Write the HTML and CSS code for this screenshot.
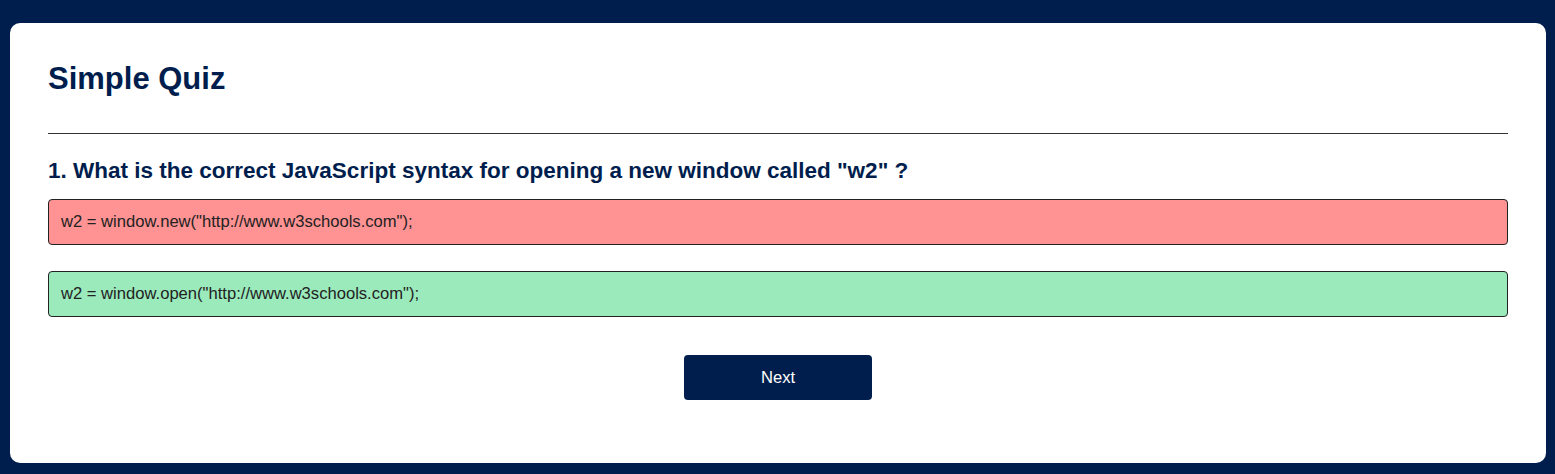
FILE: index.html
```html
<!DOCTYPE html>
<html lang="en">
<head>
<meta charset="utf-8">
<title>Simple Quiz</title>
<link rel="stylesheet" href="styles.css">
</head>
<body>
<div class="app">
  <h1 class="title">Simple Quiz</h1>
  <div class="quiz">
    <h2 class="question">1. What is the correct JavaScript syntax for opening a new window called "w2" ?</h2>
    <div class="answers">
      <button class="answer incorrect">w2 = window.new("http://www.w3schools.com");</button>
      <button class="answer correct">w2 = window.open("http://www.w3schools.com");</button>
    </div>
    <button class="next">Next</button>
  </div>
</div>
</body>
</html>
```
FILE: styles.css
```css
* { box-sizing: border-box; margin: 0; padding: 0; }
html, body { height: 100%; }
body {
  background: #001e4d;
  font-family: "Liberation Sans", Arial, sans-serif;
  padding: 23px 9px 12px 10px;
}
.app {
  background: #fff;
  border-radius: 10px;
  height: 440px;
  padding: 38px 38px 0 38px;
}
.title {
  font-size: 31px;
  font-weight: 700;
  color: #001e4d;
  line-height: 36px;
  padding-bottom: 36px;
  border-bottom: 1px solid #333;
}
.quiz { display: flex; flex-direction: column; }
.question {
  margin-top: 25px;
  font-size: 22.5px;
  line-height: 23px;
  font-weight: 700;
  color: #001e4d;
}
.answers {
  display: flex;
  flex-direction: column;
  gap: 26px;
  margin-top: 17px;
}
.answer {
  display: flex;
  align-items: center;
  height: 46px;
  width: 100%;
  border: 1px solid #222;
  border-radius: 4px;
  padding: 0 12px;
  font-family: inherit;
  font-size: 16.6px;
  color: #222;
  text-align: left;
  cursor: pointer;
}
.correct { background: #9aeabc; }
.incorrect { background: #ff9393; }
.next {
  align-self: center;
  margin-top: 38px;
  width: 188px;
  height: 45px;
  border: 0;
  border-radius: 4px;
  background: #001e4d;
  color: #fff;
  font-family: inherit;
  font-size: 16.6px;
  cursor: pointer;
}
```
